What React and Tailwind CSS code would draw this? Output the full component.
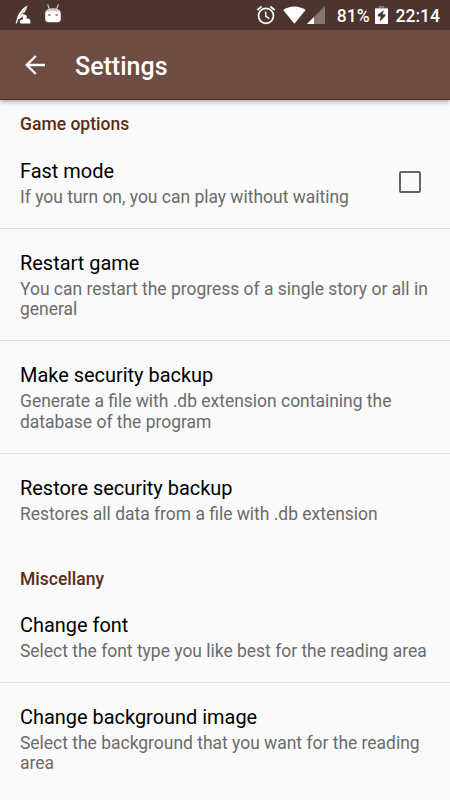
const SECTIONS = [
  {
    title: "Game options",
    headerClass: "h-[36.6px] pt-[12px]",
    items: [
      { title: "Fast mode", lines: ["If you turn on, you can play without waiting"], checkbox: true },
      { title: "Restart game", lines: ["You can restart the progress of a single story or all in", "general"] },
      { title: "Make security backup", lines: ["Generate a file with .db extension containing the", "database of the program"] },
      { title: "Restore security backup", lines: ["Restores all data from a file with .db extension"] },
    ],
  },
  {
    title: "Miscellany",
    headerClass: "h-[45.2px] pt-[21px]",
    items: [
      { title: "Change font", lines: ["Select the font type you like best for the reading area"] },
      { title: "Change background image", lines: ["Select the background that you want for the reading", "area"] },
    ],
  },
];

const QuillIcon = () => (
  <svg viewBox="0 0 18 22" className="h-[22px] w-[18px]" fill="#fff">
    <path d="M12.6 1.4C8 3.4 3.2 9 2 14.6L.6 19.2l1.1.3 1.6-4.2c3-1 4.3-3.2 5.3-5.4l-1.5-.4 2.4-.9c1.4-2.2 2.4-4.6 3.1-7.2Z" />
    <path d="m11 3.4-6.6 9.8" stroke="#8b7771" strokeWidth=".5" />
    <path d="M8.2 10.6c1.6-.6 3.6.4 3.6 2 0 .7-.3 1.1-.7 1.7 2.4.1 4.2 1 4.2 2.7v2.6H7.2c-1.5 0-2.4-.7-2.4-1.9 0-1.2 1-1.9 2.4-2.1.9-.2 1.1-.7.7-1.6-.5-1.2-.6-2.5.3-3.4Z" />
  </svg>
);

const RobotIcon = () => (
  <svg viewBox="0 0 18 20" className="h-5 w-[18px]">
    <path d="m3.6.4 1.9 4.6M14.4.4l-1.9 4.6" stroke="#d9d2d0" strokeWidth="1.1" />
    <path d="M1.2 9.5C1.2 6 4 4.4 9 4.4s7.8 1.6 7.8 5.1V15.4c-.2 1.5-1.3 2.8-3 2.8H4.2c-1.7 0-2.8-1.3-3-2.8Z" fill="#fff" />
    <path d="M2 8.1C3.2 5.5 5.8 4.8 9 4.8s5.8.7 7 3.3c-2-1.2-12-1.2-14 0Z" fill="#cfc8c5" />
    <path d="M4.3 11h2.2M11.5 11h2.2" stroke="#77625b" strokeWidth="1.4" />
  </svg>
);

const AlarmIcon = () => (
  <svg viewBox="0 0 20 20" className="h-5 w-5" fill="none" stroke="#fff">
    <circle cx="10" cy="10.8" r="7.5" strokeWidth="1.7" />
    <path d="m1.4 5 4.2-3.5M18.6 5l-4.2-3.5" strokeWidth="1.7" />
    <path d="M9.7 6.4v4.8l3.6 2.5" strokeWidth="1.5" />
  </svg>
);

const WifiIcon = () => (
  <svg viewBox="0 0 24 18" className="h-[18px] w-6" fill="#fff">
    <path d="M11.4 17.8.2 4C6.4-.8 16.4-.8 22.6 4Z" />
  </svg>
);

const SignalIcon = () => (
  <svg viewBox="0 0 18 18" className="h-[18px] w-[18px]">
    <path d="M18 0v18H0Z" fill="#877570" />
    <path d="M7 11v7H0Z" fill="#fff" />
  </svg>
);

const BatteryIcon = () => (
  <svg viewBox="0 0 13 18" className="h-[18px] w-[13px]">
    <path d="M4 0h5v1.7h4v2H0v-2h4Z" fill="#877570" />
    <path d="M0 2.5h13v14.7q0 .8-.8.8H.8q-.8 0-.8-.8Z" fill="#fff" />
    <path d="M9 4.2 2.8 8.6v1.8h3L4.4 16l6-6.2V8.2H7.6Z" fill="#4e342e" />
  </svg>
);

const StatusBar = () => (
  <div className="flex h-[30px] items-start bg-[#4e342e] text-[17.5px] leading-[30px] font-medium text-white">
    <div className="flex pt-1 pl-[15px]">
      <QuillIcon />
      <div className="ml-[11px]">
        <RobotIcon />
      </div>
    </div>
    <div className="ml-auto flex pr-[10px]">
      <div className="mr-[7px] pt-[5px]">
        <AlarmIcon />
      </div>
      <div className="pt-[6px]">
        <WifiIcon />
      </div>
      <div className="mr-3 pt-[6px]">
        <SignalIcon />
      </div>
      <span className="pt-px">81%</span>
      <div className="mr-2 ml-[5px] pt-[6px]">
        <BatteryIcon />
      </div>
      <span className="pt-px">22:14</span>
    </div>
  </div>
);

const Toolbar = () => (
  <header className="relative flex h-[70px] items-center border-b border-[#5d2c17] bg-[#6d4c41] pl-[25px] text-white shadow-[0_2px_4px_rgba(0,0,0,0.3)]">
    <svg viewBox="0 0 20 20" className="h-5 w-5" fill="none" stroke="#fff" strokeWidth="2.4">
      <path d="M20 10H2M10.8 1 1.8 10l9 9" />
    </svg>
    <h1 className="ml-[30px] pt-[4px] text-[25px] leading-[30px] font-medium">Settings</h1>
  </header>
);

const Preference = ({ item }) => (
  <div className="flex items-center justify-between pt-[22.2px] pr-[29px] pb-[21.5px] pl-5">
    <div className="shrink-0">
      <h3 className="mb-[3.8px] text-[19.95px] leading-[24px] text-black">{item.title}</h3>
      {item.lines.map((line) => (
        <p key={line} className="text-[17.47px] leading-[20.5px] whitespace-nowrap text-[#6b6b6b]">
          {line}
        </p>
      ))}
    </div>
    {item.checkbox && <span className="mb-px h-[22px] w-[22px] rounded-[2px] border-2 border-[#646464]" />}
  </div>
);

const App = () => (
  <div className="h-[800px] w-[450px] overflow-hidden bg-[#fafafa] font-['Roboto',sans-serif]">
    <StatusBar />
    <Toolbar />
    <main>
      {SECTIONS.map((section) => (
        <section key={section.title}>
          <h2 className={`pl-5 text-[17.55px] leading-6 font-medium text-[#5d2c17] ${section.headerClass}`}>
            {section.title}
          </h2>
          {section.items.map((item, index) => (
            <div key={item.title} className={index > 0 ? "-mt-px border-t border-[#dedede]" : ""}>
              <Preference item={item} />
            </div>
          ))}
        </section>
      ))}
    </main>
  </div>
);

export default App;
